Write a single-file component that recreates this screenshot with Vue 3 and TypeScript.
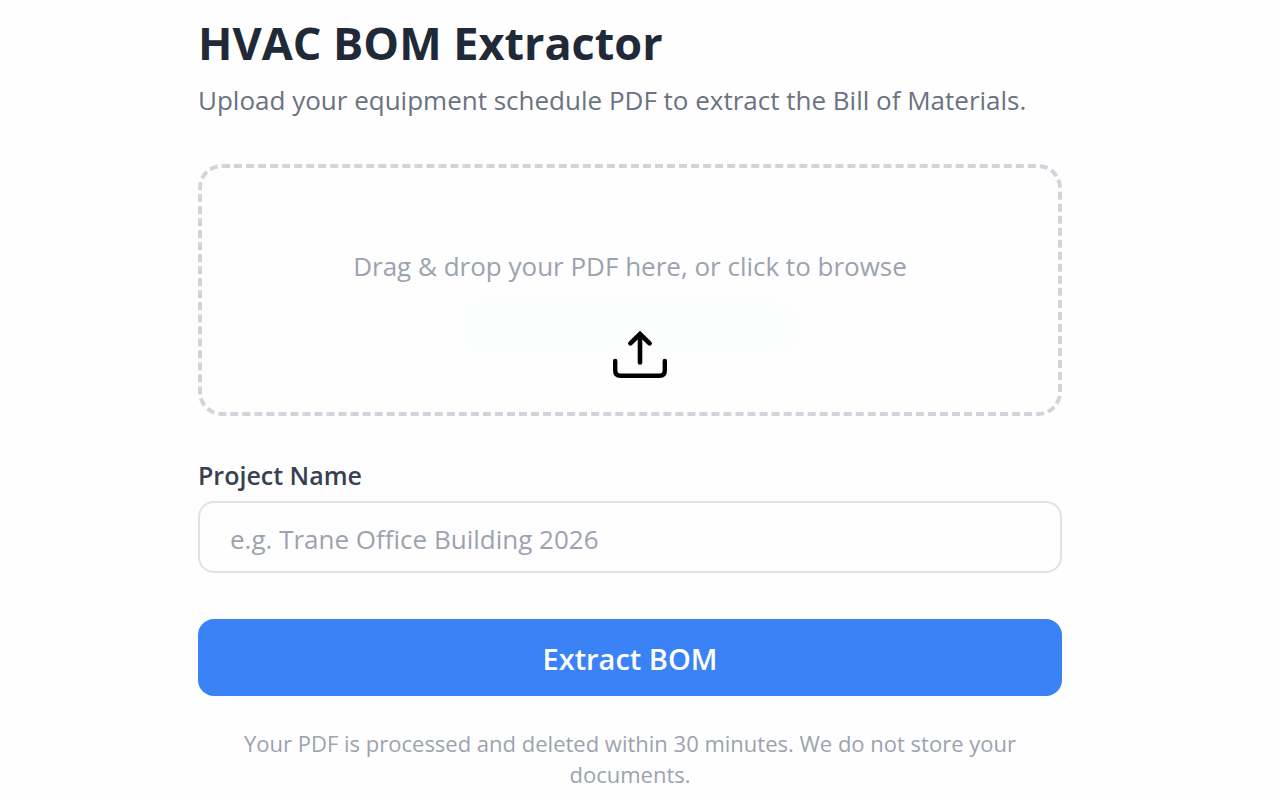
<script setup lang="ts">
import { ref } from 'vue'

const projectName = ref<string>('')
const pdfFile = ref<File | null>(null)

function onFileChange(event: Event): void {
  const input = event.target as HTMLInputElement
  pdfFile.value = input.files?.[0] ?? null
}

function onDrop(event: DragEvent): void {
  pdfFile.value = event.dataTransfer?.files[0] ?? null
}
</script>

<template>
  <main class="page">
    <form class="extractor" @submit.prevent>
      <header class="intro">
        <h1 class="title">HVAC BOM Extractor</h1>
        <p class="subtitle">Upload your equipment schedule PDF to extract the Bill of Materials.</p>
      </header>

      <label class="dropzone" @dragover.prevent @drop.prevent="onDrop">
        <span class="tint"></span>
        <input class="file-input" type="file" accept="application/pdf" @change="onFileChange" />
        <span class="drop-text">Drag &amp; drop your PDF here, or click to browse</span>
        <svg class="upload-icon" viewBox="0 0 54 48" fill="none" aria-hidden="true">
          <path
            d="M2.2 31V40.5Q2.2 45.7 7.4 45.7H46.6Q51.8 45.7 51.8 40.5V31"
            stroke="#000"
            stroke-width="4.4"
            stroke-linecap="round"
          />
          <path d="M27 5V32.5" stroke="#000" stroke-width="4.6" stroke-linecap="round" />
          <path
            d="M17.4 13.4L27 4L36.6 13.4"
            stroke="#000"
            stroke-width="4.6"
            stroke-linecap="round"
            stroke-linejoin="miter"
          />
        </svg>
      </label>

      <div class="field">
        <label class="field-label" for="project-name">Project Name</label>
        <input
          id="project-name"
          v-model="projectName"
          class="text-input"
          type="text"
          placeholder="e.g. Trane Office Building 2026"
        />
      </div>

      <button class="submit" type="submit">Extract BOM</button>

      <p class="notice">
        Your PDF is processed and deleted within 30 minutes. We do not store your documents.
      </p>
    </form>
  </main>
</template>

<style>
body {
  background: #fefefe;
}
</style>

<style scoped>
.page {
  display: flex;
  justify-content: center;
  padding: 12px 36px 8px 16px;
  font-family: 'Segoe UI', 'Open Sans', 'Noto Sans', sans-serif;
}

.extractor {
  display: flex;
  flex-direction: column;
  width: 100%;
  max-width: 864px;
}

.title {
  margin: 0;
  font-size: 45px;
  line-height: 62px;
  font-weight: 700;
  color: #1f2937;
}

.subtitle {
  margin: 6px 0 0;
  font-size: 26px;
  line-height: 40px;
  color: #6b7280;
}

.dropzone {
  position: relative;
  display: flex;
  flex-direction: column;
  align-items: center;
  gap: 44px;
  box-sizing: border-box;
  margin-top: 44px;
  padding: 78px 24px 34px;
  border: 4px dashed #d1d5db;
  border-radius: 24px;
  cursor: pointer;
}

.tint {
  position: absolute;
  left: 30%;
  top: 130px;
  width: 40%;
  height: 56px;
  border-radius: 28px;
  background: #fbfefd;
}

.file-input {
  position: absolute;
  width: 1px;
  height: 1px;
  opacity: 0;
}

.drop-text {
  font-size: 26px;
  line-height: 40px;
  color: #9ca3af;
}

.upload-icon {
  position: relative;
  width: 54px;
  height: 48px;
  margin-left: 20px;
}

.field {
  display: flex;
  flex-direction: column;
  gap: 6px;
  margin-top: 39px;
}

.field-label {
  font-size: 25px;
  line-height: 40px;
  font-weight: 600;
  color: #374151;
}

.text-input {
  box-sizing: border-box;
  width: 100%;
  height: 72px;
  padding: 4px 30px 0;
  border: 2px solid #e0e2e6;
  border-radius: 16px;
  background: #fefefe;
  font-family: inherit;
  font-size: 26px;
  color: #1f2937;
}

.text-input::placeholder {
  color: #9ca3af;
  opacity: 1;
}

.submit {
  margin-top: 46px;
  padding: 20px 32px 17px;
  border: 0;
  border-radius: 16px;
  background: #3b82f6;
  font-family: inherit;
  font-size: 29px;
  line-height: 40px;
  font-weight: 600;
  color: #fff;
  cursor: pointer;
}

.notice {
  margin: 32px 0 0;
  padding: 0 32px;
  font-size: 22px;
  line-height: 31px;
  text-align: center;
  color: #9ca3af;
}
</style>
